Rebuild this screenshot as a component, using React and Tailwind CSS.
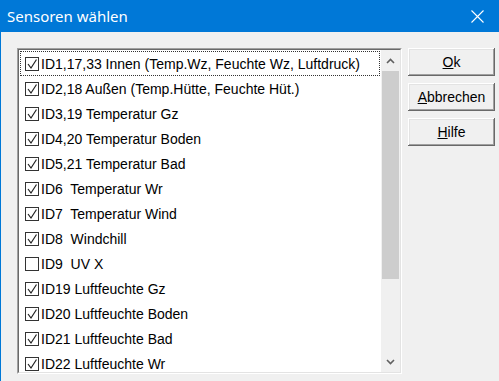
import React from "react";

const items = [
  ["ID1,17,33 Innen (Temp.Wz, Feuchte Wz, Luftdruck)", true],
  ["ID2,18 Außen (Temp.Hütte, Feuchte Hüt.)", true],
  ["ID3,19 Temperatur Gz", true],
  ["ID4,20 Temperatur Boden", true],
  ["ID5,21 Temperatur Bad", true],
  ["ID6  Temperatur Wr", true],
  ["ID7  Temperatur Wind", true],
  ["ID8  Windchill", true],
  ["ID9  UV X", false],
  ["ID19 Luftfeuchte Gz", true],
  ["ID20 Luftfeuchte Boden", true],
  ["ID21 Luftfeuchte Bad", true],
  ["ID22 Luftfeuchte Wr", true],
];

function Check({ checked }) {
  return (
    <div className="w-[14px] h-[14px] border border-[#333] bg-white shrink-0 flex items-center justify-center">
      {checked && (
        <svg width="12" height="12" viewBox="0 0 12 12">
          <path d="M2 6 L5 10 L10.5 1.5" fill="none" stroke="#222" strokeWidth="1.2" />
        </svg>
      )}
    </div>
  );
}

function Btn({ u, rest }) {
  return (
    <div className="h-[28px] w-[87px] bg-[#f0f0f0] flex items-center justify-center text-[14px] text-black shadow-[inset_-1px_-1px_#696969,inset_1px_1px_#ffffff,inset_-2px_-2px_#a0a0a0,inset_2px_2px_#e3e3e3]">
      <span><span className="underline">{u}</span>{rest}</span>
    </div>
  );
}

export default function App() {
  return (
    <div
      className="w-[499px] h-[381px] bg-[#f0f0f0] flex flex-col overflow-hidden"
      style={{ fontFamily: '"Liberation Sans", Arial, sans-serif' }}
    >
      <div className="h-[32px] bg-[#0078d7] flex items-center justify-between pl-[7px] pr-[15px] text-white shrink-0">
        <span className="text-[15px]" style={{ fontFamily: '"Noto Sans", sans-serif' }}>
          Sensoren wählen
        </span>
        <svg width="13" height="13" viewBox="0 0 13 13">
          <path d="M0.5 0.5 L12.5 12.5 M12.5 0.5 L0.5 12.5" stroke="#fff" strokeWidth="1.1" />
        </svg>
      </div>
      <div className="flex-1 flex border-l border-[#0078d7] pl-[16px] pt-[16px] gap-[6px]">
        <div className="w-[385px] h-[326px] flex border-t border-l border-[#a0a0a0] border-b border-r border-b-white border-r-white">
          <div className="flex-1 flex border-t border-l border-[#696969] border-b border-r border-b-[#e3e3e3] border-r-[#e3e3e3] bg-white overflow-hidden">
            <div className="flex-1 pt-[1px] overflow-hidden">
              {items.map(([label, checked], i) => (
                <div
                  key={i}
                  className={`h-[25px] mx-[1px] pl-[4px] flex items-center gap-[2px] border ${
                    i === 0 ? "border-dotted border-[#333]" : "border-transparent"
                  }`}
                >
                  <Check checked={checked} />
                  <span className="text-[14px] text-black whitespace-pre leading-none">{label}</span>
                </div>
              ))}
            </div>
            <div className="w-[19px] bg-[#f0f0f0] flex flex-col shrink-0">
              <div className="h-[21px] flex items-center justify-center">
                <svg width="9" height="6" viewBox="0 0 9 6">
                  <path d="M1 5 L4.5 1.5 L8 5" fill="none" stroke="#606060" strokeWidth="1.6" />
                </svg>
              </div>
              <div className="h-[208px] bg-[#cdcdcd] mx-[1px]" />
              <div className="flex-1" />
              <div className="h-[21px] flex items-center justify-center">
                <svg width="9" height="6" viewBox="0 0 9 6">
                  <path d="M1 1 L4.5 4.5 L8 1" fill="none" stroke="#606060" strokeWidth="1.6" />
                </svg>
              </div>
            </div>
          </div>
        </div>
        <div className="flex flex-col gap-[7px]">
          <Btn u="O" rest="k" />
          <Btn u="A" rest="bbrechen" />
          <Btn u="H" rest="ilfe" />
        </div>
      </div>
    </div>
  );
}
